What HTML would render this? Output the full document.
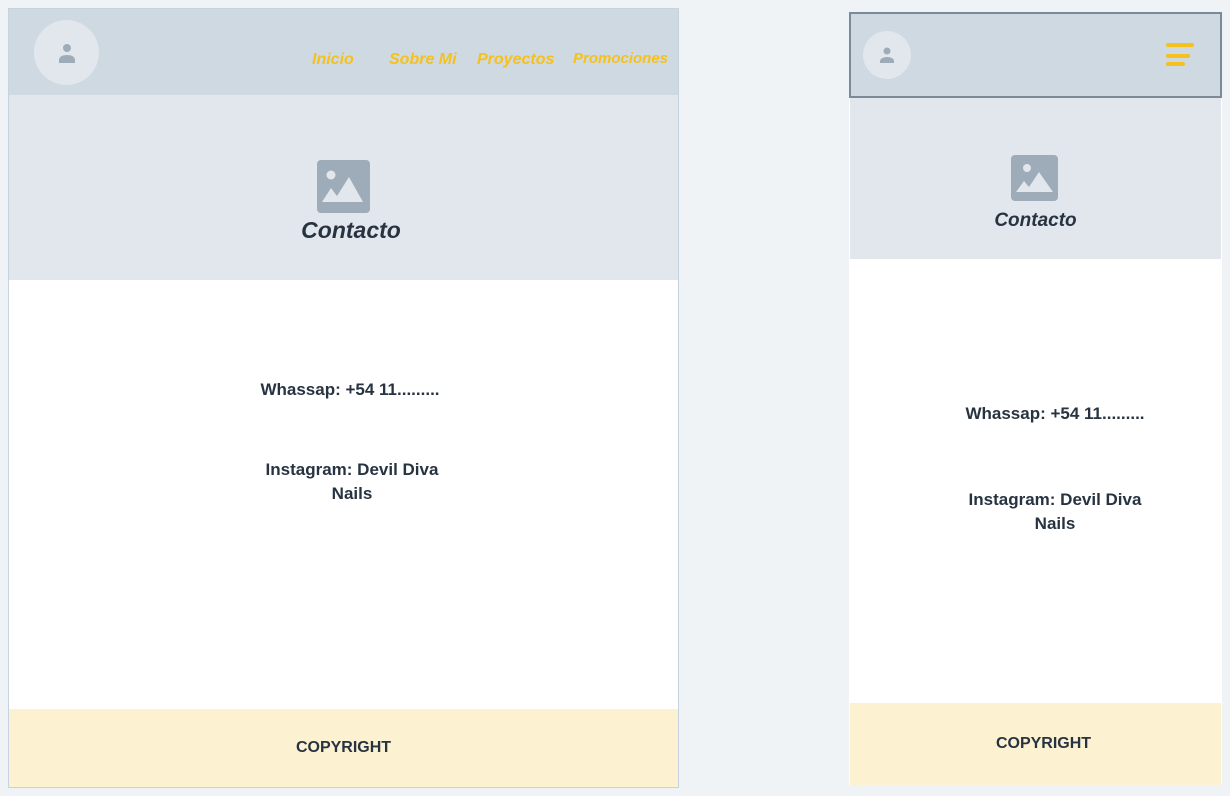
<!DOCTYPE html>
<html><head><meta charset="utf-8"><style>
*{margin:0;padding:0;box-sizing:border-box}
body{width:1230px;height:796px;background:#eff3f6;position:relative;overflow:hidden;font-family:"Liberation Sans",sans-serif;color:#273340}
.a{position:absolute}
.nav{color:#f5c11c;font-style:italic;font-weight:bold;font-size:16px}
.c{text-align:center;font-weight:bold}
</style></head><body>
<div class="a" style="left:8px;top:8px;width:671px;height:780px;border:1px solid #c6d3de;background:#fff"></div>
<div class="a" style="left:9px;top:9px;width:669px;height:86px;background:#cfd9e1"></div>
<div class="a" style="left:34px;top:20px;width:65px;height:65px;border-radius:50%;background:#e1e7ec"></div>
<svg class="a" style="left:56px;top:41px" width="22" height="24" viewBox="0 0 22 24"><circle cx="11" cy="7" r="4" fill="#9eacb9"/><path d="M3 22v-3c0-3 3-5 8-5s8 2 8 5v3z" fill="#9eacb9"/></svg>
<div class="a nav" style="left:312px;top:51px">Inicio</div>
<div class="a nav" style="left:389px;top:51px">Sobre Mi</div>
<div class="a nav" style="left:477px;top:51px">Proyectos</div>
<div class="a nav" style="left:573px;top:50px;font-size:15px">Promociones</div>
<div class="a" style="left:9px;top:95px;width:669px;height:185px;background:#e1e7ec"></div>
<svg class="a" style="left:317px;top:160px" width="54" height="54" viewBox="0 0 54 54"><rect width="53" height="53" rx="4" fill="#9eacb9"/><circle cx="14" cy="15" r="4.5" fill="#e1e7ec"/><path d="M5 42l9-14 6 8 12-19 14 25z" fill="#e1e7ec"/></svg>
<div class="a c" style="left:9px;width:669px;top:217px;font-size:23px;font-style:italic"><span style="margin-left:15px">Contacto</span></div>
<div class="a c" style="left:200px;width:300px;top:380px;font-size:17px">Whassap: +54 11.........</div>
<div class="a c" style="left:252px;width:200px;top:458px;font-size:17px;line-height:24px">Instagram: Devil Diva Nails</div>
<div class="a" style="left:9px;top:709px;width:669px;height:78px;background:#fcf1d1"></div>
<div class="a c" style="left:9px;width:669px;top:739px;font-size:16px">COPYRIGHT</div>
<div class="a" style="left:849px;top:13px;width:373px;height:772px;background:#fff"></div>
<div class="a" style="left:849px;top:12px;width:373px;height:86px;background:#cfd9e1;border:2px solid #7b8a99"></div>
<div class="a" style="left:863px;top:31px;width:48px;height:48px;border-radius:50%;background:#e1e7ec"></div>
<svg class="a" style="left:877px;top:45px" width="20" height="20" viewBox="0 0 20 20"><circle cx="10" cy="6" r="3.5" fill="#9eacb9"/><path d="M3 18v-2c0-2 3-4 7-4s7 2 7 4v2z" fill="#9eacb9"/></svg>
<div class="a" style="left:1166px;top:43px;width:28px;height:4px;border-radius:2px;background:#f5c11c"></div>
<div class="a" style="left:1166px;top:54px;width:24px;height:4px;border-radius:2px;background:#f5c11c"></div>
<div class="a" style="left:1166px;top:62px;width:19px;height:4px;border-radius:2px;background:#f5c11c"></div>
<div class="a" style="left:850px;top:98px;width:371px;height:161px;background:#e1e7ec"></div>
<svg class="a" style="left:1011px;top:155px" width="48" height="47" viewBox="0 0 48 47"><rect width="47" height="46" rx="4" fill="#9eacb9"/><circle cx="16" cy="13" r="4" fill="#e1e7ec"/><path d="M5 37l8-11 5 6 10-15 14 20z" fill="#e1e7ec"/></svg>
<div class="a c" style="left:850px;width:371px;top:210px;font-size:19px;font-style:italic">Contacto</div>
<div class="a c" style="left:905px;width:300px;top:404px;font-size:17px">Whassap: +54 11.........</div>
<div class="a c" style="left:955px;width:200px;top:488px;font-size:17px;line-height:24px">Instagram: Devil Diva Nails</div>
<div class="a" style="left:850px;top:703px;width:371px;height:82px;background:#fcf1d1"></div>
<div class="a c" style="left:850px;width:371px;top:735px;font-size:16px;padding-left:16px">COPYRIGHT</div>
</body></html>
